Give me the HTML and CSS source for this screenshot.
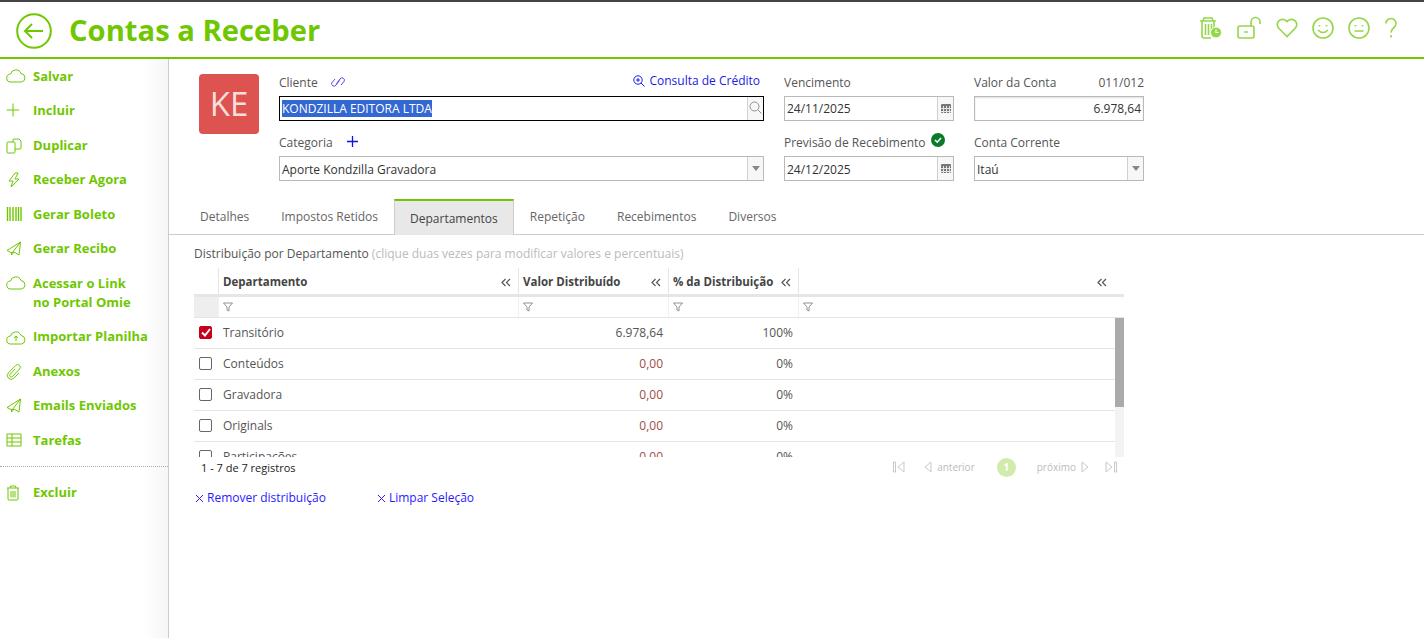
FILE: index.html
```html
<!DOCTYPE html>
<html lang="pt-BR">
<head>
  <meta charset="UTF-8">
  <title>Contas a Receber</title>
  <link rel="stylesheet" href="styles.css">
</head>
<body>
  <header class="topbar">
    <svg class="back" width="36" height="36" viewBox="0 0 36 36"><circle cx="18" cy="18" r="16.8"/><path d="M27 18H9M16 11l-7 7 7 7"/></svg>
    <h1>Contas a Receber</h1>
    <div class="top-icons">
      <svg width="25" height="24" viewBox="0 0 25 24"><path d="M2 5h16M5 5l1-3h8l1 3M4 5v15q0 2 2 2h7M16 5v7M7.500 8v11M10.500 8v11M13.500 8v9"/><circle class="fill" cx="18" cy="16.500" r="5.500"/><path class="w" d="M18 13.500v3h2.500"/></svg>
      <svg width="25" height="24" viewBox="0 0 25 24"><rect x="1" y="10" width="16" height="12" rx="2"/><path d="M7 16h4M14 10V6a4.500 4.500 0 0 1 9 0v2"/></svg>
      <svg width="22" height="20" viewBox="0 0 22 20"><path d="M11 18.500 2.800 10.300a5.200 5.200 0 0 1 7.400-7.400l.8.8.8-.8a5.200 5.200 0 0 1 7.400 7.400z"/></svg>
      <svg width="22" height="22" viewBox="0 0 22 22"><circle cx="11" cy="11" r="10"/><path d="M6 13q5 5 10 0M7.500 8v1.500M14.500 8v1.500"/></svg>
      <svg width="22" height="22" viewBox="0 0 22 22"><circle cx="11" cy="11" r="10"/><path d="M6.500 14h9M7.500 8v1.500M14.500 8v1.500"/></svg>
      <svg width="14" height="22" viewBox="0 0 14 22"><path d="M2 6.500a5 5 0 1 1 8 4c-2 1.500-3 2.500-3 5M7 18v2.500"/></svg>
    </div>
  </header>

  <div class="layout">
    <nav class="sidebar">
      <a class="side-item"><svg width="20" height="14" viewBox="0 0 20 14"><path d="M5 13a4 4 0 0 1-.5-8A5.500 5.500 0 0 1 15 4.500 4.300 4.300 0 0 1 15.500 13z"/></svg>Salvar</a>
      <a class="side-item"><svg width="20" height="14" viewBox="0 0 20 14"><path d="M7 .5v13M.8 7h12.400"/></svg>Incluir</a>
      <a class="side-item"><svg width="20" height="16" viewBox="0 0 20 16"><rect x="1" y="4" width="8" height="11" rx="1"/><path d="M7 4V2q0-1 1-1h5l2 2v7q0 1-1 1H9"/></svg>Duplicar</a>
      <a class="side-item"><svg width="20" height="16" viewBox="0 0 20 16"><path d="M9 1 3 9h4l-2 6 8-8H9l3-6z"/></svg>Receber Agora</a>
      <a class="side-item"><svg width="20" height="14" viewBox="0 0 20 14"><path class="bars" d="M1.500 0v14M4 0v14M7 0v14M10 0v14M12.500 0v14M15 0v14"/></svg>Gerar Boleto</a>
      <a class="side-item"><svg width="20" height="16" viewBox="0 0 20 16"><path d="M14.500 1 1 9.500l5 2.500 8.500-11-1.500 13-5-3-2.500 3v-3"/></svg>Gerar Recibo</a>
      <a class="side-item"><svg width="20" height="14" viewBox="0 0 20 14"><path d="M5 13a4 4 0 0 1-.5-8A5.500 5.500 0 0 1 15 4.500 4.300 4.300 0 0 1 15.500 13z"/></svg><span>Acessar o Link<br>no Portal Omie</span></a>
      <a class="side-item"><svg width="20" height="16" viewBox="0 0 20 16"><path d="M5 15a4 4 0 0 1-.5-8A5.500 5.500 0 0 1 15 6.500 4.300 4.300 0 0 1 15.500 15zM10 12V7M8 9l2-2 2 2"/></svg>Importar Planilha</a>
      <a class="side-item"><svg width="20" height="16" viewBox="0 0 20 16"><path d="M9 5 4 10.500a1.600 1.600 0 0 0 2.300 2.200L13.500 5a2.600 2.600 0 0 0-3.700-3.700L2.500 8.800a3.800 3.800 0 0 0 5.400 5.400L13 9"/></svg>Anexos</a>
      <a class="side-item"><svg width="20" height="16" viewBox="0 0 20 16"><path d="M14.500 1 1 9.500l5 2.500 8.500-11-1.500 13-5-3-2.500 3v-3"/></svg>Emails Enviados</a>
      <a class="side-item"><svg width="20" height="14" viewBox="0 0 20 14"><path d="M1 1h14v12H1zM1 5h14M1 9h14M6 1v12"/></svg>Tarefas</a>
      <div class="side-sep"></div>
      <a class="side-item"><svg width="20" height="16" viewBox="0 0 20 16"><path d="M1 3h12M4 3l.5-2h5l.5 2M2 3v11q0 1 1 1h8q1 0 1-1V3M5 6v6.500M7 6v6.500M9 6v6.500"/></svg>Excluir</a>
    </nav>

    <main class="content">
      <section class="form">
        <div class="avatar">KE</div>
        <div class="col-client">
          <div class="label-row">
            <label>Cliente</label>
            <svg class="link-ic" width="16" height="12" viewBox="0 0 16 12"><path d="M6.500 7.500 10 3a2 2 0 0 1 4 2.500L11 9M9.500 4.500 6 9a2 2 0 0 1-4-2.500L5 3"/></svg>
            <a class="credit"><svg width="12" height="12" viewBox="0 0 12 12"><circle cx="5" cy="5" r="4.200"/><path d="M8 8l3.500 3.500M3 5h4M5 3v4"/></svg>Consulta de Crédito</a>
          </div>
          <div class="field focus"><span class="val"><span class="selected">KONDZILLA EDITORA LTDA</span></span>
            <span class="addon"><svg class="search" width="13" height="13" viewBox="0 0 13 13"><circle cx="5.500" cy="5.500" r="4.500"/><path d="m9 9 3.500 3.500"/></svg></span></div>
          <div class="label-row second">
            <label>Categoria</label>
            <svg class="plus" width="11" height="11" viewBox="0 0 11 11"><path d="M5.500 0v11M0 5.500h11"/></svg>
          </div>
          <div class="field"><span class="val">Aporte Kondzilla Gravadora</span><span class="addon"><i class="caret"></i></span></div>
        </div>
        <div class="col-small">
          <div class="label-row"><label>Vencimento</label></div>
          <div class="field"><span class="val">24/11/2025</span><span class="addon"><i class="cal"></i></span></div>
          <div class="label-row second">
            <label>Previsão de Recebimento</label>
            <svg class="ok" width="14" height="14" viewBox="0 0 14 14"><circle cx="7" cy="7" r="7"/><path d="m4 7 2.200 2.200L10 5"/></svg>
          </div>
          <div class="field"><span class="val">24/12/2025</span><span class="addon"><i class="cal"></i></span></div>
        </div>
        <div class="col-small">
          <div class="label-row between"><label>Valor da Conta</label><span>011/012</span></div>
          <div class="field inset"><span class="val right">6.978,64</span></div>
          <div class="label-row second"><label>Conta Corrente</label></div>
          <div class="field"><span class="val">Itaú</span><span class="addon"><i class="caret"></i></span></div>
        </div>
      </section>

      <div class="tabs">
        <a class="tab">Detalhes</a>
        <a class="tab">Impostos Retidos</a>
        <a class="tab active">Departamentos</a>
        <a class="tab">Repetição</a>
        <a class="tab">Recebimentos</a>
        <a class="tab">Diversos</a>
      </div>

      <section class="panel">
        <p class="hint">Distribuição por Departamento <span>(clique duas vezes para modificar valores e percentuais)</span></p>

        <div class="grid-wrap">
          <div class="row head">
            <div class="cell"></div>
            <div class="cell">Departamento<svg class="coll" width="10" height="9" viewBox="0 0 10 9"><path d="M4.500 1 1 4.500 4.500 8M9 1 5.500 4.500 9 8"/></svg></div>
            <div class="cell">Valor Distribuído<svg class="coll" width="10" height="9" viewBox="0 0 10 9"><path d="M4.500 1 1 4.500 4.500 8M9 1 5.500 4.500 9 8"/></svg></div>
            <div class="cell">% da Distribuição<svg class="coll" width="10" height="9" viewBox="0 0 10 9"><path d="M4.500 1 1 4.500 4.500 8M9 1 5.500 4.500 9 8"/></svg></div>
            <div class="cell"><svg class="coll" width="10" height="9" viewBox="0 0 10 9"><path d="M4.500 1 1 4.500 4.500 8M9 1 5.500 4.500 9 8"/></svg></div>
          </div>
          <div class="row filter">
            <div class="cell grey"></div>
            <div class="cell"><svg width="10" height="10" viewBox="0 0 10 10"><path d="M.5 1h9L6 5v4L4 8V5z"/></svg></div>
            <div class="cell"><svg width="10" height="10" viewBox="0 0 10 10"><path d="M.5 1h9L6 5v4L4 8V5z"/></svg></div>
            <div class="cell"><svg width="10" height="10" viewBox="0 0 10 10"><path d="M.5 1h9L6 5v4L4 8V5z"/></svg></div>
            <div class="cell"><svg width="10" height="10" viewBox="0 0 10 10"><path d="M.5 1h9L6 5v4L4 8V5z"/></svg></div>
          </div>
          <div class="grid-body">
            <div class="rows">
              <div class="row">
                <div class="cell"><span class="check on"><svg width="10" height="9" viewBox="0 0 10 9"><path d="m1 4.500 3 3L9 1"/></svg></span></div>
                <div class="cell">Transitório</div>
                <div class="cell num">6.978,64</div>
                <div class="cell num">100%</div>
                <div class="cell"></div>
              </div>
              <div class="row">
                <div class="cell"><span class="check"></span></div>
                <div class="cell">Conteúdos</div>
                <div class="cell num zero">0,00</div>
                <div class="cell num">0%</div>
                <div class="cell"></div>
              </div>
              <div class="row">
                <div class="cell"><span class="check"></span></div>
                <div class="cell">Gravadora</div>
                <div class="cell num zero">0,00</div>
                <div class="cell num">0%</div>
                <div class="cell"></div>
              </div>
              <div class="row">
                <div class="cell"><span class="check"></span></div>
                <div class="cell">Originals</div>
                <div class="cell num zero">0,00</div>
                <div class="cell num">0%</div>
                <div class="cell"></div>
              </div>
              <div class="row">
                <div class="cell"><span class="check"></span></div>
                <div class="cell">Participações</div>
                <div class="cell num zero">0,00</div>
                <div class="cell num">0%</div>
                <div class="cell"></div>
              </div>
            </div>
            <div class="scroll"><div class="thumb"></div></div>
          </div>
          <div class="grid-foot">
            <span class="count">1 - 7 de 7 registros</span>
            <div class="pager">
              <svg width="12" height="12" viewBox="0 0 12 12"><path d="M.5 1h2v10h-2zM11 1 5 6l6 5z"/></svg>
              <span class="pg prev"><svg width="8" height="12" viewBox="0 0 8 12"><path d="M7 1 1 6l6 5z"/></svg>anterior</span>
              <span class="pg-num">1</span>
              <span class="pg next">próximo<svg width="8" height="12" viewBox="0 0 8 12"><path d="m1 1 6 5-6 5z"/></svg></span>
              <svg width="12" height="12" viewBox="0 0 12 12"><path d="m1 1 6 5-6 5zM9.500 1h2v10h-2z"/></svg>
            </div>
          </div>
        </div>

        <div class="actions">
          <a><svg width="9" height="9" viewBox="0 0 9 9"><path d="m1 1 7 7M8 1 1 8"/></svg>Remover distribuição</a>
          <a><svg width="9" height="9" viewBox="0 0 9 9"><path d="m1 1 7 7M8 1 1 8"/></svg>Limpar Seleção</a>
        </div>
      </section>
    </main>
  </div>
</body>
</html>
```

FILE: styles.css
```css
* { margin: 0; padding: 0; box-sizing: border-box; }
html, body { height: 100%; }
body {
  background: #fff;
  font-family: "Open Sans", sans-serif;
  font-size: 12px;
  color: #555;
  overflow: hidden;
  display: flex;
  flex-direction: column;
}
svg { fill: none; display: block; flex: none; }

/* top bar */
.topbar {
  height: 59px;
  flex: none;
  border-top: 2px solid #444;
  border-bottom: 2px solid #6fc700;
  display: flex;
  align-items: center;
  padding-left: 16px;
}
.back { stroke: #6fc700; stroke-width: 2; margin-top: 2px; }
.topbar h1 {
  font-size: 29.200px;
  font-weight: 700;
  color: #6fc700;
  margin-left: 17px;
  line-height: 38px;
}
.top-icons {
  margin-left: auto;
  margin-right: 26px;
  display: flex;
  align-items: center;
  gap: 14px;
  margin-top: -3px;
}
.top-icons svg { stroke: #95d64a; stroke-width: 1.6; }
.top-icons .fill { fill: #95d64a; stroke: #fff; stroke-width: 1; }
.top-icons .w { stroke: #fff; stroke-width: 1.2; }

.layout { flex: 1; display: flex; min-height: 0; }

/* sidebar */
.sidebar {
  width: 169px;
  flex: none;
  border-right: 1px solid #ccc;
  background: linear-gradient(to right, #fff 85%, #f6f6f6);
}
.side-item {
  display: flex;
  align-items: flex-start;
  padding: 7.750px 0 7.750px 6px;
  color: #6fc700;
  font-size: 13px;
  font-weight: 700;
  line-height: 19px;
}
.side-item svg { margin: 2px 7px 0 0; stroke: #6fc700; stroke-width: 1; }
.side-item .bars { stroke-width: 1.4; }
.side-sep { border-top: 1px dotted #aaa; margin: 8px 0 9px; }

/* form */
.content { flex: 1; min-width: 0; }
.form {
  display: flex;
  padding: 15px 0 0 30px;
  height: 140px;
}
.avatar {
  width: 60px;
  height: 60px;
  background: #dc5350;
  border-radius: 4px;
  color: #f8dedd;
  font-size: 33px;
  line-height: 60px;
  text-align: center;
  margin-right: 20px;
  flex: none;
}
.col-client { width: 485px; margin-right: 20px; }
.col-small { width: 170px; margin-right: 20px; }
.label-row {
  height: 22px;
  padding-bottom: 4px;
  display: flex;
  align-items: center;
  gap: 9px;
  font-size: 12px;
  color: #555;
  line-height: 18px;
}
.label-row.second { margin-top: 10px; height: 25px; padding-bottom: 2px; }
.label-row.between { justify-content: space-between; }
.link-ic { stroke: #5a3df0; stroke-width: 1; margin: -3px 0 0 3px; }
.plus { stroke: #1010e0; stroke-width: 1.3; margin-left: 5px; margin-top: -2px; }
.ok { margin-left: -4px; margin-top: -6px; }
.ok circle { fill: #0a7a2a; }
.ok path { stroke: #fff; stroke-width: 1.6; }
.credit {
  margin-left: auto;
  margin-right: 4px;
  margin-top: -5px;
  display: flex;
  align-items: center;
  gap: 4px;
  color: #1a1ae6;
}
.credit svg { stroke: #1a1ae6; stroke-width: 1; }
.field {
  height: 25px;
  border: 1px solid #b9b9b9;
  display: flex;
  align-items: stretch;
  color: #333;
  background: #fff;
}
.field.focus { border-color: #000; }
.field.inset { box-shadow: inset 0 1px 2px #ddd; }
.val {
  flex: 1;
  padding: 0 2px;
  line-height: 23px;
  white-space: nowrap;
  font-size: 12px;
}
.second + .field .val { line-height: 25px; }
.val.right { text-align: right; }
.selected { background: #3367d1; color: #fff; display: inline-block; line-height: 17px; }
.addon {
  width: 16px;
  border-left: 1px solid #d0d0d0;
  background: #f7f7f7;
  display: flex;
  align-items: center;
  justify-content: center;
}
.search { stroke: #777; stroke-width: .8; margin-top: -3px; }
.caret {
  border-left: 4px solid transparent;
  border-right: 4px solid transparent;
  border-top: 5px solid #888;
}
.cal {
  width: 10px;
  height: 9px;
  border-radius: 1px;
  background:
    repeating-linear-gradient(to right, transparent 0 2px, #e4e4e4 2px 3px),
    repeating-linear-gradient(to bottom, transparent 0 2px, #e4e4e4 2px 3px),
    #777;
  border-top: 2px solid #777;
}

/* tabs */
.tabs {
  display: flex;
  height: 36px;
  padding-left: 15px;
  border-bottom: 1px solid #ccc;
  align-items: stretch;
}
.tab {
  padding: 9px 16px 0;
  color: #666;
  font-size: 12px;
  line-height: 18px;
}
.tab.active {
  background: #e8e8e8;
  color: #444;
  border-top: 2px solid #6fc700;
  border-left: 1px solid #ccc;
  border-right: 1px solid #ccc;
  padding: 9px 15px 0;
  margin-bottom: -1px;
}

/* grid */
.panel { padding: 10px 0 0 25px; }
.hint { line-height: 18px; color: #555; font-size: 12px; }
.hint span { color: #bbb; }
.grid-wrap { width: 930px; margin-top: 5px; }
.row {
  display: grid;
  grid-template-columns: 24px 300px 150px 130px 1fr;
  height: 31px;
  padding-bottom: 2px;
  border-bottom: 1px solid #e4e4e4;
  align-items: center;
}
.cell { padding: 0 5px; color: #555; white-space: nowrap; }
.row.head {
  grid-template-columns: 25px 300px 150px 130px 1fr;
  height: 29px;
  padding-bottom: 0;
  border-bottom: 3px solid #e6e6e6;
  align-items: stretch;
}
.row.head .cell {
  position: relative;
  font-weight: 700;
  color: #444;
  font-size: 11.500px;
  line-height: 28px;
  border-right: 1px solid #e6e6e6;
  padding-left: 4px;
}
.row.head .cell:last-child { border-right: 0; }
.coll {
  position: absolute;
  right: 7px;
  top: 10px;
  stroke: #555;
  stroke-width: 1.2;
}
.row.head .cell:last-child .coll { right: 17px; }
.row.filter {
  grid-template-columns: 25px 300px 150px 130px 1fr;
  height: 21px;
  padding-bottom: 0;
  align-items: stretch;
}
.row.filter .cell { display: flex; align-items: center; border-right: 1px solid #f0f0f0; padding-left: 4px; }
.row.filter .cell:last-child { border-right: 0; }
.row.filter .grey { background: #eee; }
.row.filter svg { stroke: #777; stroke-width: .8; }
.grid-body { display: flex; height: 139px; overflow: hidden; }
.rows { flex: 1; min-width: 0; }
.num { text-align: right; }
.zero { color: #a14a4a; }
.check {
  display: block;
  width: 13px;
  height: 13px;
  border: 1px solid #666;
  border-radius: 2px;
}
.check.on {
  background: #c8001e;
  border-color: #c8001e;
  display: flex;
  align-items: center;
  justify-content: center;
}
.check.on svg { stroke: #fff; stroke-width: 2; }
.scroll { width: 9px; background: #f3f3f3; flex: none; margin-top: -1px; }
.thumb { height: 90px; background: #aaa; }
.grid-foot {
  display: flex;
  justify-content: space-between;
  align-items: center;
  height: 20px;
  padding: 0 7px;
}
.count { color: #222; font-size: 11px; }
.pager {
  display: flex;
  align-items: center;
  color: #bbb;
  font-size: 10px;
}
.pager svg { stroke: #c8c8c8; stroke-width: 1; }
.pg { display: flex; align-items: center; gap: 5px; }
.pg.prev { margin-left: 19px; }
.pg.next { margin-left: 21px; margin-right: 16px; }
.pg-num {
  width: 19px;
  height: 19px;
  border-radius: 50%;
  background: #d3ebaa;
  color: #fff;
  font-weight: 700;
  text-align: center;
  line-height: 19px;
  margin-left: 22px;
}

.actions {
  display: flex;
  gap: 51px;
  margin: 12px 0 0 1px;
  line-height: 18px;
}
.actions a { color: #2a1aff; display: flex; align-items: center; gap: 3px; }
.actions svg { stroke: #2a1aff; stroke-width: 1; }
```
